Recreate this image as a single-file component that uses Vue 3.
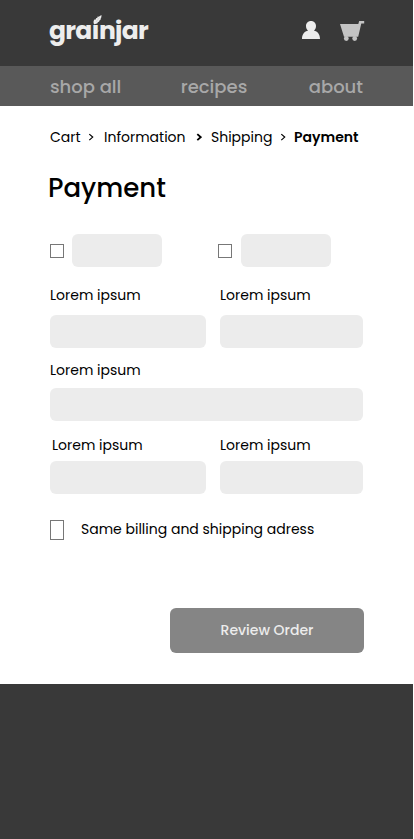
<script setup>
const links = ['shop all', 'recipes', 'about']
const crumbs = [
  { text: 'Cart', cls: 'c-cart' },
  { text: 'Information', cls: 'c-info' },
  { text: 'Shipping', cls: 'c-ship' },
  { text: 'Payment', cls: 'c-pay' },
]
</script>

<template>
  <div class="page">
    <header class="top">
      <div class="logo" aria-label="grainjar">
        <span>graınjar</span>
        <svg class="leaf" viewBox="0 0 10 11" width="9" height="10">
          <path d="M1.200 10.600C0 8 .6 5.800 2.200 4.800L3 5.200L3.400 3.200L4.600 3.600L5.200 1.700L6.300 2L9.400 0C9.500 2 9.200 3.300 8.300 4.300L8.500 5.200L6.900 6.200L7 7.200L5.300 8L5 9.100C3.800 9.900 2.800 10 2 9.900Z" fill="#ededed" />
          <path d="M3.500 7.500L7.200 2.800" stroke="#a0a0a0" stroke-width=".4" fill="none" />
        </svg>
      </div>
      <svg class="user" viewBox="0 0 18 18" width="18" height="18">
        <path d="M9 0C12 0 14 2.200 14 5C14 7 13.200 8.700 11.900 9.600C15.500 10.500 18 13.500 18 18H0C0 13.500 2.500 10.500 6.100 9.600C4.800 8.700 4 7 4 5C4 2.200 6 0 9 0Z" fill="#ededed" />
      </svg>
      <svg class="cart" viewBox="0 0 25 20" width="25" height="20">
        <path d="M0 3H18.300L19.200 0H24.200V2.600H21.300L18.200 15.800H4Z" fill="#c4c4c4" />
        <circle cx="6.300" cy="17.500" r="2.400" fill="#c4c4c4" />
        <circle cx="14.700" cy="17.500" r="2.400" fill="#c4c4c4" />
      </svg>
    </header>
    <nav class="nav">
      <a v-for="l in links" :key="l">{{ l }}</a>
    </nav>
    <main class="main">
      <div class="crumbs">
        <template v-for="(c, i) in crumbs" :key="c.text">
          <svg v-if="i" class="sep" :class="{ bold: i === 2 }" viewBox="0 0 6 8" width="6" height="8">
            <path d="M1.300 1.100L4.700 4.100L1.300 7.100" fill="none" stroke="#000" />
          </svg>
          <span :class="c.cls">{{ c.text }}</span>
        </template>
      </div>
      <h1>Payment</h1>
      <div class="cols options">
        <div class="option"><i class="box"></i><i class="field"></i></div>
        <div class="option second"><i class="box"></i><i class="field"></i></div>
      </div>
      <div class="cols first">
        <label>Lorem ipsum<i class="field"></i></label>
        <label>Lorem ipsum<i class="field"></i></label>
      </div>
      <label class="wide">Lorem ipsum<i class="field"></i></label>
      <div class="cols last">
        <label><span class="indent">Lorem ipsum</span><i class="field"></i></label>
        <label>Lorem ipsum<i class="field"></i></label>
      </div>
      <div class="same"><i class="box tall"></i><span>Same billing and shipping adress</span></div>
      <button>Review Order</button>
    </main>
    <footer></footer>
  </div>
</template>

<style>
body { background: #fff; }
</style>

<style scoped>
.page {
  width: 413px;
  height: 839px;
  display: flex;
  flex-direction: column;
  font-family: Poppins, Inter, sans-serif;
  font-feature-settings: "cv11";
  font-size: 14px;
  color: #000;
}
.top {
  box-sizing: border-box;
  height: 66px;
  background: #393939;
  display: flex;
  align-items: flex-start;
  padding-left: 49px;
}
.logo {
  position: relative;
  width: 253px;
  margin-top: 15px;
  font-size: 25px;
  line-height: 32px;
  font-weight: 700;
  letter-spacing: -0.7px;
  color: #ededed;
}
.leaf { position: absolute; left: 44px; top: 0; }
.user { margin-top: 21px; }
.cart { margin: 21px 0 0 20px; }
.nav {
  box-sizing: border-box;
  height: 40px;
  background: #595959;
  display: flex;
  justify-content: space-between;
  align-items: center;
  padding: 0 50px;
  font-size: 18px;
  font-weight: 500;
  color: #a8a8a8;
}
.nav a:nth-child(2) { margin: 0 1px 0 -1px; }
.main {
  box-sizing: border-box;
  height: 578px;
  padding: 22px 50px 0;
  display: flex;
  flex-direction: column;
}
.crumbs {
  display: flex;
  align-items: center;
  height: 18px;
  line-height: 18px;
  white-space: nowrap;
}
.crumbs span { flex: none; }
.sep { flex: none; margin-top: 0; stroke-width: 1.2; }
.sep.bold { stroke-width: 1.9; margin-top: -1px; }
.c-cart { width: 38px; }
.c-info { width: 92px; margin-left: 10px; }
.c-ship { width: 69px; margin-left: 9px; }
.c-pay { margin-left: 8px; font-weight: 600; }
h1 {
  margin: 24px 0 0 -2px;
  height: 36px;
  font-size: 26px;
  line-height: 36px;
  font-weight: 500;
}
.cols {
  display: grid;
  grid-template-columns: 156px 143px;
  column-gap: 14px;
}
.field {
  display: block;
  height: 33px;
  border-radius: 6px;
  background: #ececec;
}
.box {
  box-sizing: border-box;
  width: 14px;
  height: 14px;
  border: 1px solid #777;
}
.options { margin-top: 28px; }
.option { display: flex; align-items: center; gap: 8px; }
.option .field { width: 90px; }
.second { margin-left: -2px; gap: 9px; }
label { display: block; line-height: 18px; }
.first { margin-top: 19px; }
.first .field { margin-top: 11px; }
.wide { margin-top: 13px; }
.wide .field { margin-top: 9px; }
.last { margin-top: 15px; }
.last .field { margin-top: 7px; }
.indent { margin-left: 2px; }
.same { display: flex; align-items: center; margin-top: 26px; gap: 17px; height: 20px; }
.same span { line-height: 18px; margin-bottom: 2px; }
.tall { height: 20px; }
button {
  margin: 68px -1px 0 0;
  align-self: flex-end;
  width: 194px;
  height: 45px;
  border: 0;
  border-radius: 6px;
  background: #858585;
  color: #ececec;
  font: inherit;
  font-weight: 500;
}
footer { flex: 1; background: #393939; }
</style>
